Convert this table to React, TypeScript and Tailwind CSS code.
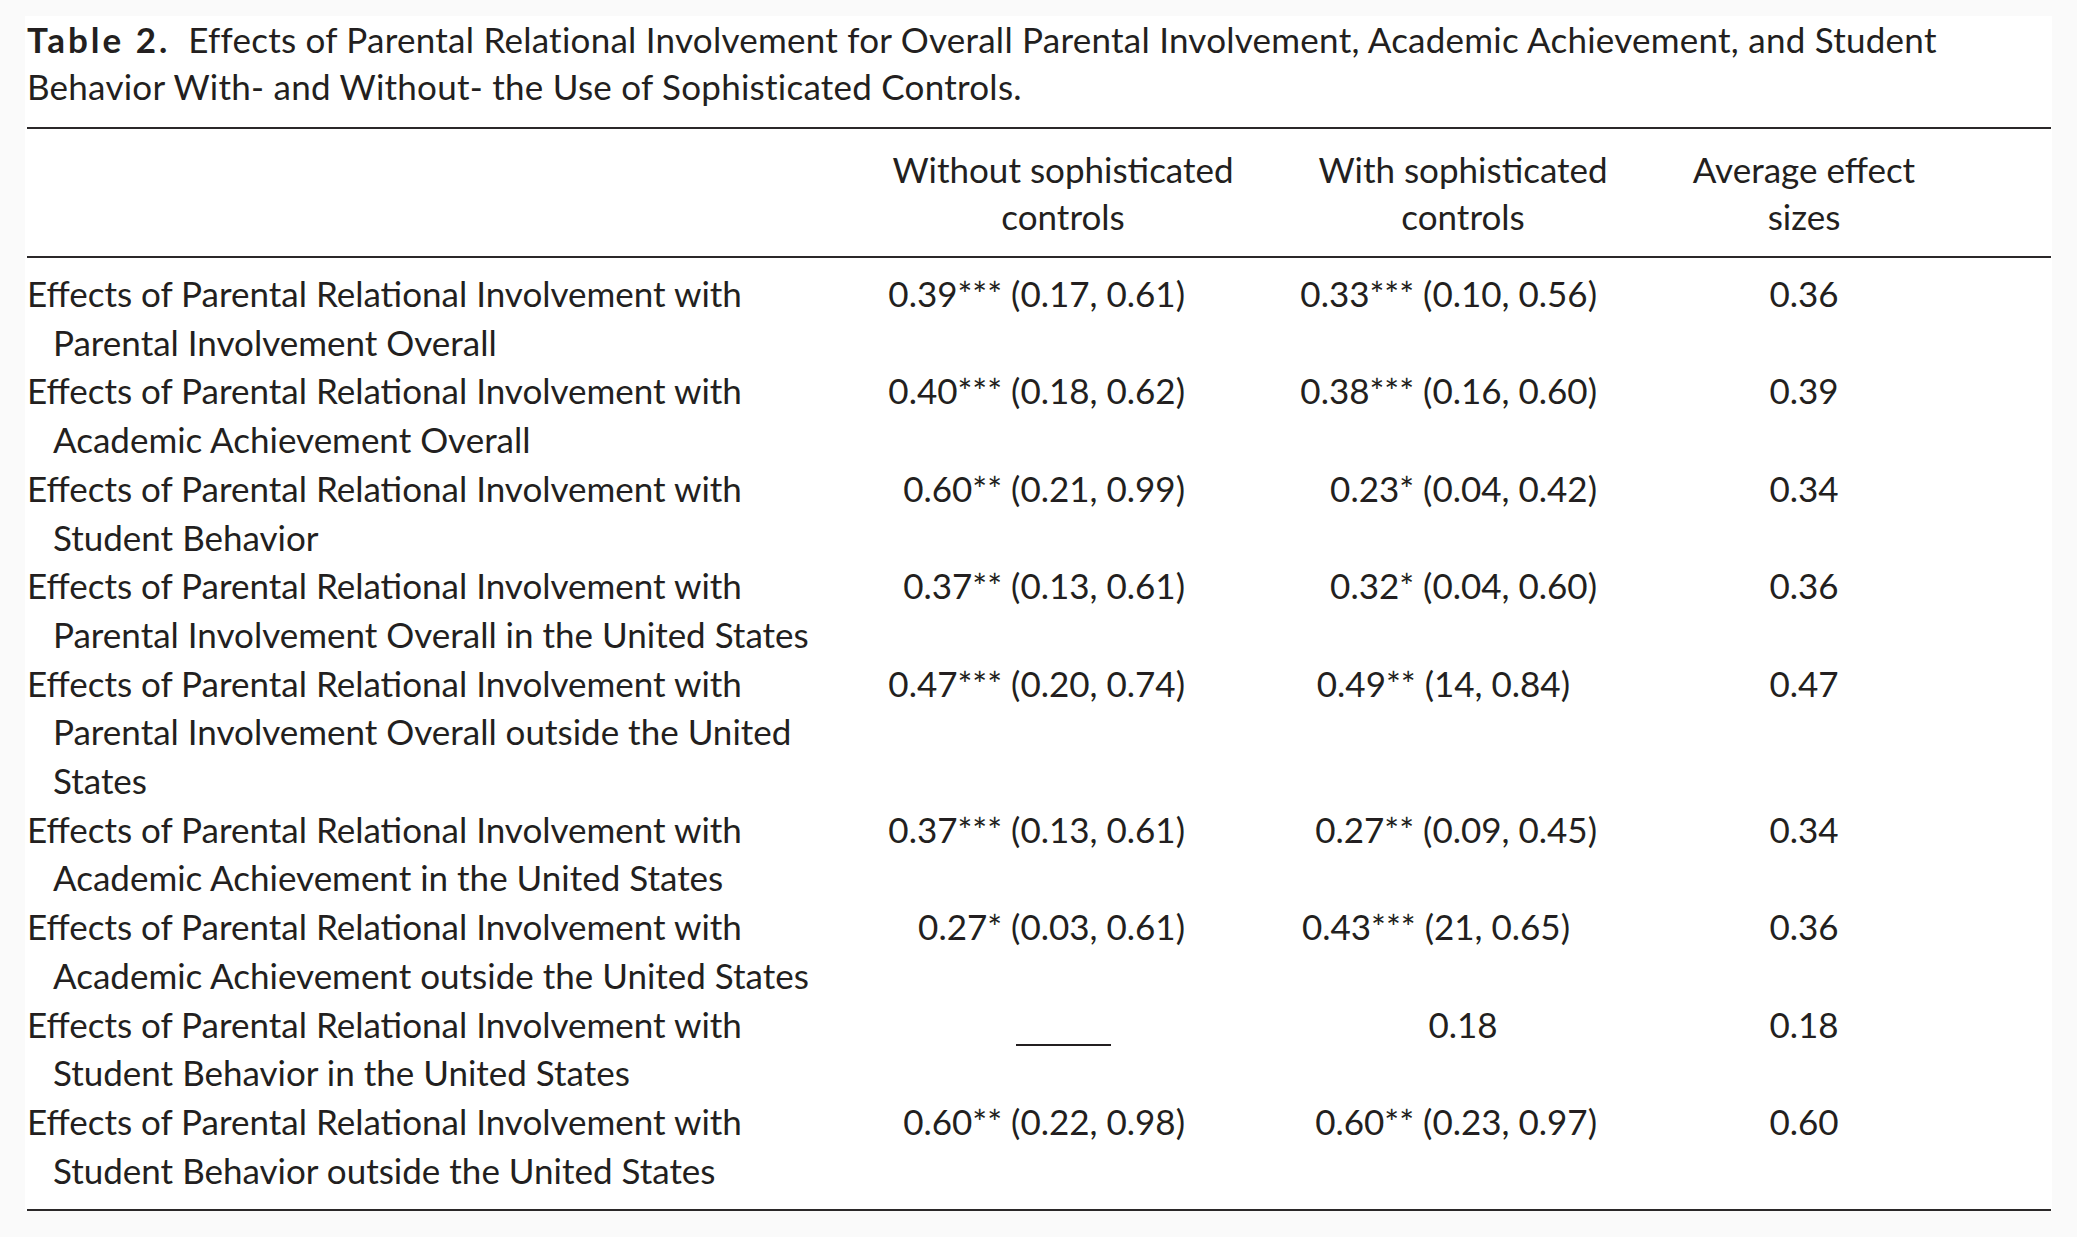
const ink = 'text-[#231f20]'

type Row = {
  label: string[]
  c1: string | null
  c2: string
  c2Short?: boolean
  c3: string
}

const rows: Row[] = [
  {
    label: ['Effects of Parental Relational Involvement with', 'Parental Involvement Overall'],
    c1: '0.39*** (0.17, 0.61)',
    c2: '0.33*** (0.10, 0.56)',
    c3: '0.36',
  },
  {
    label: ['Effects of Parental Relational Involvement with', 'Academic Achievement Overall'],
    c1: '0.40*** (0.18, 0.62)',
    c2: '0.38*** (0.16, 0.60)',
    c3: '0.39',
  },
  {
    label: ['Effects of Parental Relational Involvement with', 'Student Behavior'],
    c1: '0.60** (0.21, 0.99)',
    c2: '0.23* (0.04, 0.42)',
    c3: '0.34',
  },
  {
    label: ['Effects of Parental Relational Involvement with', 'Parental Involvement Overall in the United States'],
    c1: '0.37** (0.13, 0.61)',
    c2: '0.32* (0.04, 0.60)',
    c3: '0.36',
  },
  {
    label: [
      'Effects of Parental Relational Involvement with',
      'Parental Involvement Overall outside the United',
      'States',
    ],
    c1: '0.47*** (0.20, 0.74)',
    c2: '0.49** (14, 0.84)',
    c2Short: true,
    c3: '0.47',
  },
  {
    label: ['Effects of Parental Relational Involvement with', 'Academic Achievement in the United States'],
    c1: '0.37*** (0.13, 0.61)',
    c2: '0.27** (0.09, 0.45)',
    c3: '0.34',
  },
  {
    label: ['Effects of Parental Relational Involvement with', 'Academic Achievement outside the United States'],
    c1: '0.27* (0.03, 0.61)',
    c2: '0.43*** (21, 0.65)',
    c2Short: true,
    c3: '0.36',
  },
  {
    label: ['Effects of Parental Relational Involvement with', 'Student Behavior in the United States'],
    c1: null,
    c2: '0.18',
    c3: '0.18',
  },
  {
    label: ['Effects of Parental Relational Involvement with', 'Student Behavior outside the United States'],
    c1: '0.60** (0.22, 0.98)',
    c2: '0.60** (0.23, 0.97)',
    c3: '0.60',
  },
]

const Rule = () => <div className="h-[2px] w-[2024px] bg-[#2b2829]" />

export default function App() {
  return (
    <div className="min-h-screen bg-[#fafafa] pt-[25px] font-['Lato',sans-serif]">
      <div className={`ml-[25px] w-[2027px] bg-white pl-[2px] ${ink}`}>
        <div className="-mt-[9px] text-[35px] leading-[47px] tracking-[0.25px]">
          <p>
            <span className="mr-[18px] font-bold tracking-[3px]">Table 2.</span>
            Effects of Parental Relational Involvement for Overall Parental Involvement, Academic Achievement, and Student
          </p>
          <p>Behavior With- and Without- the Use of Sophisticated Controls.</p>
        </div>

        <div className="mt-[17px]">
          <Rule />
        </div>

        <div className="flex pt-[17px] pb-[16px] text-center text-[35px] leading-[47px]">
          <div className="w-[833px]" />
          <div className="w-[406px]">
            <p>Without sophisticated</p>
            <p>controls</p>
          </div>
          <div className="w-[394px]">
            <p>With sophisticated</p>
            <p>controls</p>
          </div>
          <div className="w-[288px]">
            <p>Average effect</p>
            <p>sizes</p>
          </div>
        </div>

        <Rule />

        <div className="flex flex-col pt-[11px] pb-[15px] text-[35px] leading-[48.7px]">
          {rows.map((row, i) => (
            <div key={i} className="flex items-start">
              <div className="w-[833px]">
                {row.label.map((line, j) => (
                  <p key={j} className={j > 0 ? 'pl-[26px]' : ''}>
                    {line}
                  </p>
                ))}
              </div>
              <div className="flex w-[406px] justify-end pr-[81px]">
                {row.c1 ? (
                  <span>{row.c1}</span>
                ) : (
                  <div className="flex w-full justify-center pl-[81px]">
                    <div className="pt-[44px]">
                      <div className="h-[2px] w-[95px] bg-[#231f20]" />
                    </div>
                  </div>
                )}
              </div>
              {row.c2 === '0.18' ? (
                <div className="w-[394px] text-center">{row.c2}</div>
              ) : (
                <div className={`flex w-[394px] justify-end ${row.c2Short ? 'pr-[90px]' : 'pr-[63px]'}`}>
                  <span>{row.c2}</span>
                </div>
              )}
              <div className="w-[288px] text-center">{row.c3}</div>
            </div>
          ))}
        </div>

        <Rule />
      </div>
    </div>
  )
}
